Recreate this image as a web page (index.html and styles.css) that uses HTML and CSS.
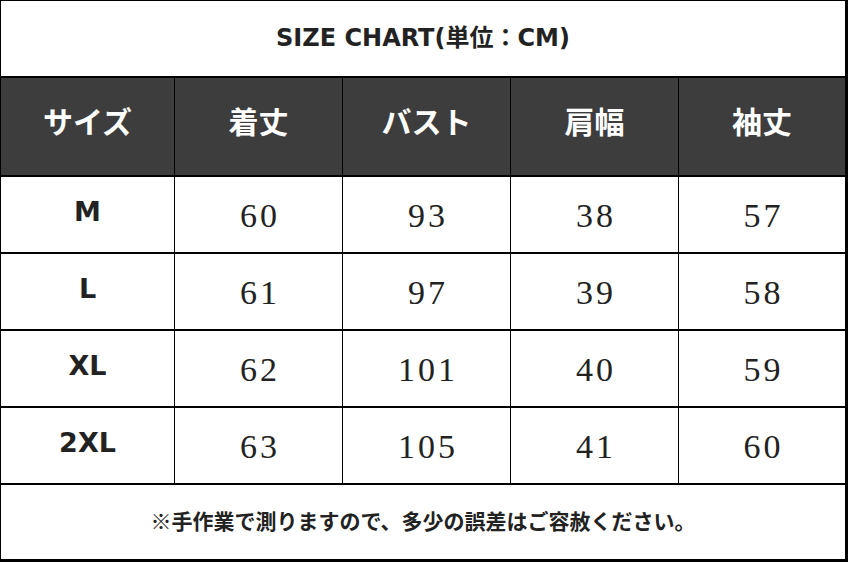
FILE: index.html
```html
<!DOCTYPE html>
<html lang="ja">
<head>
<meta charset="utf-8">
<title>SIZE CHART</title>
<link rel="stylesheet" href="styles.css">
</head>
<body>
<div class="chart">
  <div class="title">SIZE CHART(単位：CM)</div>

  <div class="head">サイズ</div>
  <div class="head">着丈</div>
  <div class="head">バスト</div>
  <div class="head">肩幅</div>
  <div class="head">袖丈</div>

  <div class="size">M</div>
  <div class="num">60</div>
  <div class="num">93</div>
  <div class="num">38</div>
  <div class="num">57</div>

  <div class="size">L</div>
  <div class="num">61</div>
  <div class="num">97</div>
  <div class="num">39</div>
  <div class="num">58</div>

  <div class="size">XL</div>
  <div class="num">62</div>
  <div class="num">101</div>
  <div class="num">40</div>
  <div class="num">59</div>

  <div class="size">2XL</div>
  <div class="num">63</div>
  <div class="num">105</div>
  <div class="num">41</div>
  <div class="num">60</div>

  <div class="note">※手作業で測りますので、多少の誤差はご容赦ください。</div>
</div>
</body>
</html>
```

FILE: styles.css
```css
html, body {
  margin: 0;
  padding: 0;
  background: #ffffff;
}

.chart {
  box-sizing: border-box;
  width: 848px;
  height: 562px;
  background: #000000;
  border-style: solid;
  border-color: #000000;
  border-width: 1px 3px 3px 1px;
  display: grid;
  grid-template-columns: 173px 167px 167px 167px 166px;
  grid-template-rows: 75px 97px 75px 75px 75px 75px 74px;
  gap: 2px 1px;
}

.chart > div {
  display: flex;
  align-items: center;
  justify-content: center;
  background: #ffffff;
  color: #222222;
  box-sizing: border-box;
}

.title {
  grid-column: 1 / -1;
  font-family: "DejaVu Sans", "Noto Sans CJK JP", sans-serif;
  font-weight: bold;
  font-size: 24px;
  padding-bottom: 7px;
}

.chart > .head {
  background: #3d3d3d;
  color: #ffffff;
  font-family: "Noto Sans CJK JP", sans-serif;
  font-weight: bold;
  font-size: 30px;
  padding-bottom: 14px;
}

.size {
  font-family: "DejaVu Sans", sans-serif;
  font-weight: bold;
  font-size: 27px;
  padding-bottom: 7px;
}

.num {
  font-family: "Liberation Serif", serif;
  font-size: 34px;
  letter-spacing: 3px;
  padding-left: 3px;
  padding-top: 2px;
  color: #1a1a1a;
}

.note {
  grid-column: 1 / -1;
  font-family: "Noto Sans CJK JP", sans-serif;
  font-weight: bold;
  font-size: 21px;
  padding-bottom: 4px;
}
```
